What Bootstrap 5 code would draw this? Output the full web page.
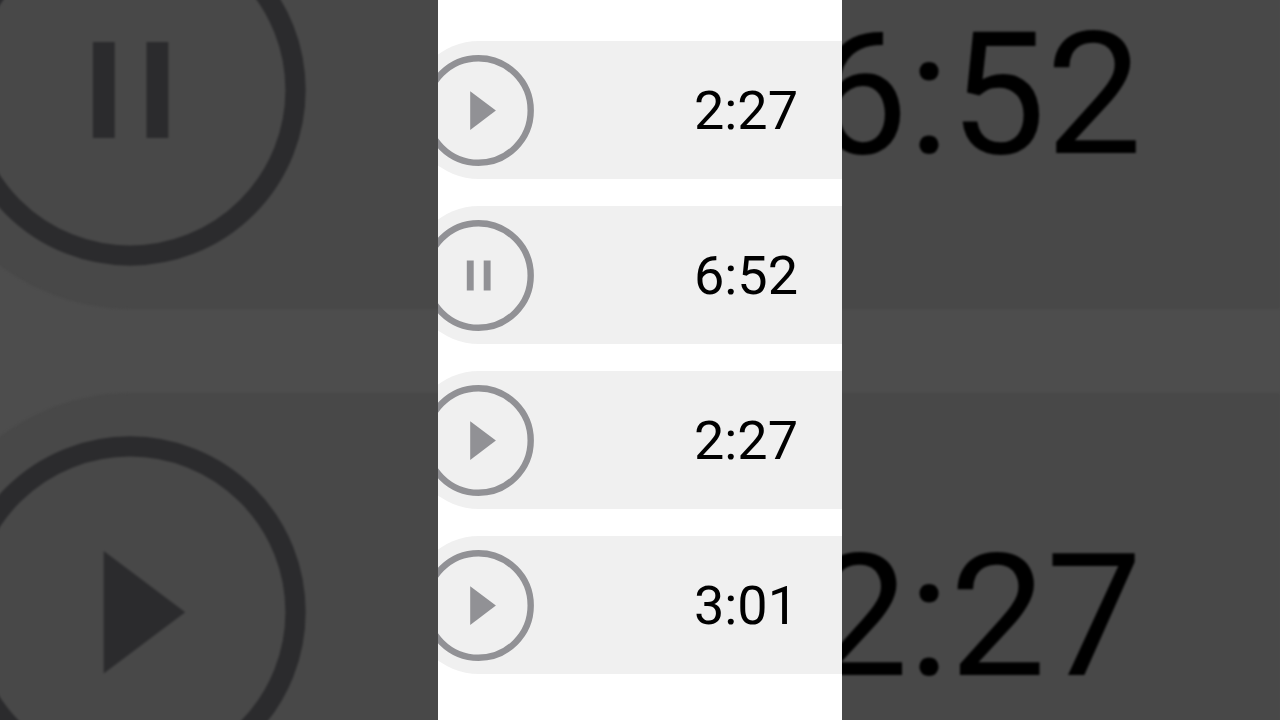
<!DOCTYPE html>
<html lang="en">
<head>
<meta charset="utf-8">
<meta name="viewport" content="width=device-width, initial-scale=1">
<title>Audio messages</title>
<link href="https://cdn.jsdelivr.net/npm/bootstrap@5.3.0/dist/css/bootstrap.min.css" rel="stylesheet">
<style>
  body { font-family: Roboto, "Liberation Sans", sans-serif; background: #4d4d4d; }

  /* Backdrop and player share one grid, the player on top */
  .stage { grid-template: minmax(0, 1fr) / 438fr 404fr 438fr; }
  .backdrop { grid-area: 1 / 1 / 2 / 4; background: #4d4d4d; }
  .player { grid-area: 1 / 2 / 2 / 3; padding-top: 41px; z-index: 1; }

  .tracks {
    --track: #f0f0f0; --ink: #919195;
    --height: 138px; --gap: 27px; --bleed: 28px;
    --inset: 13px; --end: 44px; --control: 111px;
    --digits: 54px; --drop: 2px;
    gap: var(--gap);
    margin-left: calc(-1 * var(--bleed));
  }
  .tracks-large {
    --track: #484848; --ink: #2b2b2d;
    --height: 438px; --gap: 84px; --bleed: 88px;
    --inset: 42px; --end: 138px; --control: 352px;
    --digits: 171px; --drop: 8px;
    margin-top: -129px;
    filter: blur(1px);
  }
  .track {
    height: var(--height);
    padding-left: var(--inset);
    padding-right: var(--end);
    background: var(--track);
    border-radius: var(--height) 0 0 var(--height);
  }
  .control {
    --bs-btn-color: var(--ink);
    --bs-btn-hover-color: var(--ink);
    --bs-btn-active-color: var(--ink);
    width: var(--control);
    height: var(--control);
  }
  .glyph-ring { fill: none; stroke: currentColor; stroke-width: 6.4; }
  .glyph-sign { fill: currentColor; }
  .duration {
    padding-top: var(--drop);
    font-size: var(--digits);
    line-height: 1;
    color: #000;
  }
</style>
</head>
<body>
<svg class="d-none" aria-hidden="true">
  <symbol id="play" viewBox="0 0 111 111">
    <circle class="glyph-ring" cx="55.5" cy="55.5" r="52.2"/>
    <path class="glyph-sign" d="M47.2 36.3v38.6L72.9 55.6z"/>
  </symbol>
  <symbol id="pause" viewBox="0 0 111 111">
    <circle class="glyph-ring" cx="55.5" cy="55.5" r="52.2"/>
    <path class="glyph-sign" d="M43.8 40.4h6.9v30.2h-6.9zM60.7 40.4h6.9v30.2h-6.9z"/>
  </symbol>
</svg>

<main class="stage d-grid vh-100 overflow-hidden">
  <section class="backdrop overflow-hidden" aria-label="Enlarged messages">
    <ul class="tracks tracks-large list-unstyled d-flex flex-column mb-0">
      <li class="track d-flex align-items-center justify-content-between">
        <button type="button" class="control btn p-0 border-0 rounded-circle d-flex flex-shrink-0" aria-label="Pause"><svg class="w-100 h-100"><use href="#pause"/></svg></button>
        <span class="duration">6:52</span>
      </li>
      <li class="track d-flex align-items-center justify-content-between">
        <button type="button" class="control btn p-0 border-0 rounded-circle d-flex flex-shrink-0" aria-label="Play"><svg class="w-100 h-100"><use href="#play"/></svg></button>
        <span class="duration">2:27</span>
      </li>
    </ul>
  </section>

  <section class="player bg-white overflow-hidden" aria-label="Messages">
    <ul class="tracks list-unstyled d-flex flex-column mb-0">
      <li class="track d-flex align-items-center justify-content-between">
        <button type="button" class="control btn p-0 border-0 rounded-circle d-flex flex-shrink-0" aria-label="Play"><svg class="w-100 h-100"><use href="#play"/></svg></button>
        <span class="duration">2:27</span>
      </li>
      <li class="track d-flex align-items-center justify-content-between">
        <button type="button" class="control btn p-0 border-0 rounded-circle d-flex flex-shrink-0" aria-label="Pause"><svg class="w-100 h-100"><use href="#pause"/></svg></button>
        <span class="duration">6:52</span>
      </li>
      <li class="track d-flex align-items-center justify-content-between">
        <button type="button" class="control btn p-0 border-0 rounded-circle d-flex flex-shrink-0" aria-label="Play"><svg class="w-100 h-100"><use href="#play"/></svg></button>
        <span class="duration">2:27</span>
      </li>
      <li class="track d-flex align-items-center justify-content-between">
        <button type="button" class="control btn p-0 border-0 rounded-circle d-flex flex-shrink-0" aria-label="Play"><svg class="w-100 h-100"><use href="#play"/></svg></button>
        <span class="duration">3:01</span>
      </li>
    </ul>
  </section>
</main>
<script src="https://cdn.jsdelivr.net/npm/bootstrap@5.3.0/dist/js/bootstrap.bundle.min.js"></script>
</body>
</html>
